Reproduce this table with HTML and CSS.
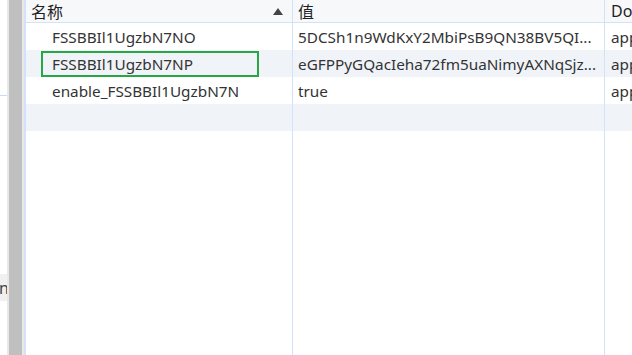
FILE: index.html
```html
<!DOCTYPE html>
<html lang="zh">
<head>
<meta charset="utf-8">
<link rel="stylesheet" href="styles.css">
</head>
<body>
<div class="page">
  <div class="side">
    <div class="side-top"></div>
    <div class="side-gap"></div>
    <div class="side-item"><span>n</span></div>
  </div>
  <div class="splitter"><div class="split-bar"></div></div>
  <div class="table">
    <div class="row head">
      <div class="cell c1"><span class="label">名称</span><span class="sort"></span></div>
      <div class="cell c2">值</div>
      <div class="cell c3">Do</div>
    </div>
    <div class="row">
      <div class="cell c1 name">FSSBBIl1UgzbN7NO</div>
      <div class="cell c2">5DCSh1n9WdKxY2MbiPsB9QN38BV5QI...</div>
      <div class="cell c3">app</div>
    </div>
    <div class="row alt">
      <div class="cell c1 name"><span class="focus">FSSBBIl1UgzbN7NP</span></div>
      <div class="cell c2">eGFPPyGQacIeha72fm5uaNimyAXNqSjz...</div>
      <div class="cell c3">app</div>
    </div>
    <div class="row">
      <div class="cell c1 name">enable_FSSBBIl1UgzbN7N</div>
      <div class="cell c2">true</div>
      <div class="cell c3">app</div>
    </div>
    <div class="row alt">
      <div class="cell c1"></div>
      <div class="cell c2"></div>
      <div class="cell c3"></div>
    </div>
    <div class="row fill">
      <div class="cell c1"></div>
      <div class="cell c2"></div>
      <div class="cell c3"></div>
    </div>
  </div>
</div>
</body>
</html>
```
FILE: styles.css
```css
html, body {
  margin: 0;
  padding: 0;
  background: #ffffff;
}
body {
  font-family: "Noto Sans", "Noto Sans CJK SC", sans-serif;
  font-size: 15.3px;
  color: #333333;
}
.page {
  display: flex;
  height: 355px;
  width: 632px;
  overflow: hidden;
}
.side {
  width: 7px;
  flex: none;
  display: flex;
  flex-direction: column;
}
.side-top {
  height: 95px;
  border-bottom: 1px solid #c9dcf6;
  flex: none;
}
.side-gap {
  height: 178px;
  flex: none;
}
.side-item {
  height: 27px;
  background: #f0f0f0;
  overflow: hidden;
  display: flex;
  justify-content: flex-end;
  align-items: center;
  font-size: 16px;
  color: #444;
}
.side-item span {
  margin-right: -2px;
}
.splitter {
  width: 17px;
  flex: none;
  display: flex;
  background: #e8e8e8;
  padding: 0 2px;
  box-sizing: border-box;
}
.split-bar {
  flex: 1;
  background: #c0c0c0;
}
.table {
  flex: 1;
  display: flex;
  flex-direction: column;
  border-left: 2px solid #d3e2fa;
  min-width: 0;
}
.row {
  display: grid;
  grid-template-columns: 267px 312px 1fr;
  height: 27px;
  flex: none;
}
.row.alt {
  background: #f0f4f9;
}
.row.fill {
  flex: 1;
}
.cell {
  border-right: 1px solid #d3e2fa;
  display: flex;
  align-items: center;
  white-space: nowrap;
  overflow: hidden;
  padding-left: 5px;
}
.cell.c3 {
  border-right: none;
  padding-left: 6px;
}
.head {
  height: 22px;
  background: #f7f8fa;
  border-bottom: 1px solid #d3e2fa;
  color: #222;
  font-size: 16px;
}
.head .c1 {
  justify-content: space-between;
}
.sort {
  width: 0;
  height: 0;
  border-left: 5px solid transparent;
  border-right: 5px solid transparent;
  border-bottom: 7px solid #444;
  margin-right: 9px;
}
.name {
  padding-left: 26px;
}
.row .c2 {
  padding-left: 5px;
}
.focus {
  border: 2px solid #27a844;
  margin-left: -11px;
  padding: 0 0 0 9px;
  width: 205px;
  height: 22px;
  display: flex;
  align-items: center;
}
```
